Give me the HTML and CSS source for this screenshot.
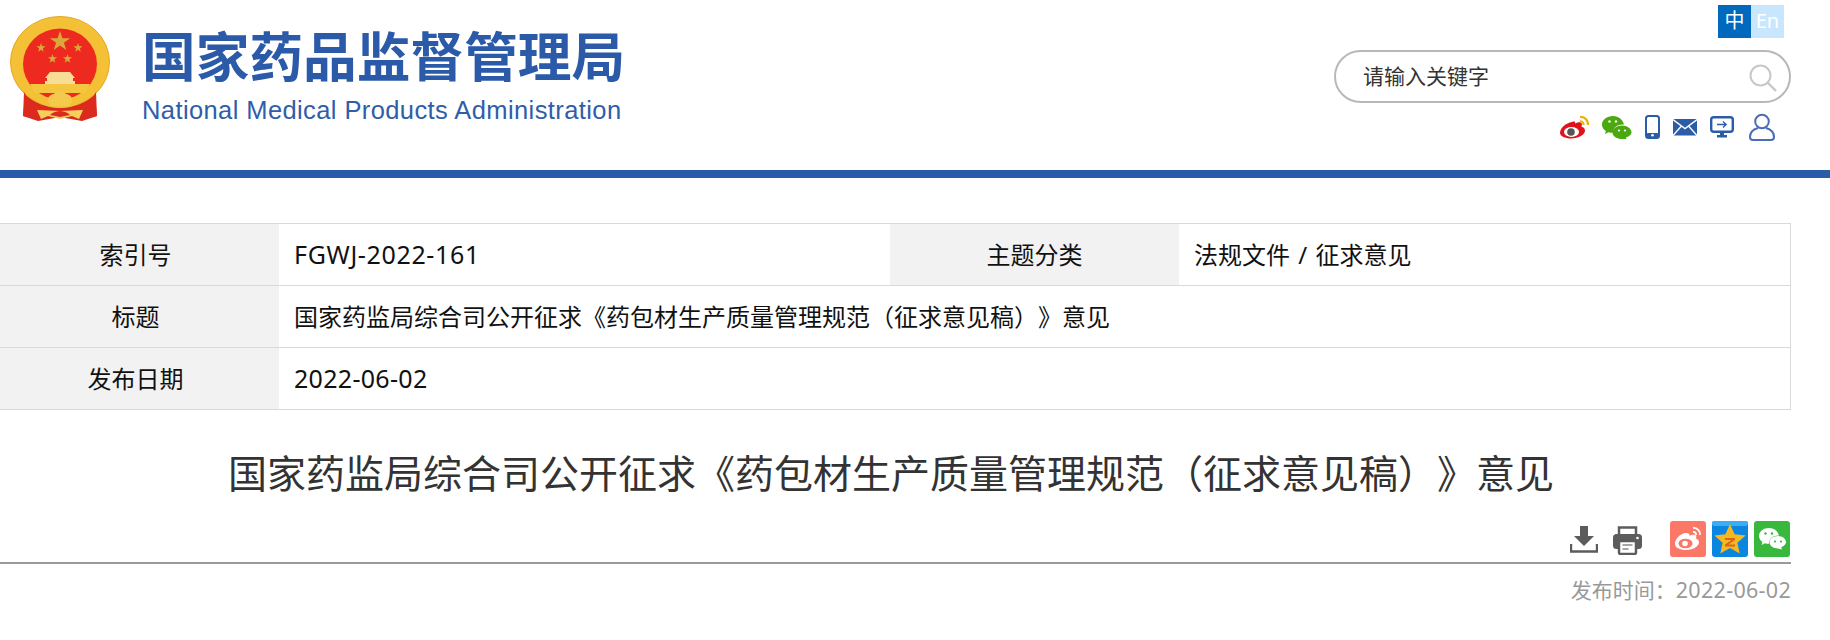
FILE: index.html
```html
<!DOCTYPE html>
<html lang="zh-CN">
  <head>
    <title>国家药监局综合司公开征求《药包材生产质量管理规范（征求意见稿）》意见</title>
    <meta charset="utf-8" />
    <link rel="stylesheet" href="styles.css">
  </head>

  <body>
    <header class="header">
      <div class="brand">
        <svg class="emblem" viewBox="0 0 130 135" width="130" height="135">
          <path d="M26 90 L23 116 L38 121 L60 117 L82 121 L97 116 L94 90 Z" fill="#d92a1c" />
          <ellipse cx="60" cy="62" rx="49.500" ry="45.500" fill="#f4c136" />
          <ellipse cx="60" cy="62" rx="49.500" ry="45.500" fill="none" stroke="#e5a825" stroke-width="1" />
          <ellipse cx="60" cy="64" rx="37" ry="35.500" fill="#ee2a20" />
          <path d="M60 31l2.400 7.300h7.700l-6.200 4.500 2.400 7.300-6.300-4.500-6.300 4.500 2.400-7.300-6.200-4.500h7.700z" fill="#d9a93a" />
          <path d="M41 43l1.100 3.300h3.500l-2.800 2.100 1 3.300-2.800-2-2.800 2 1-3.300-2.800-2.100h3.500z" fill="#d9a93a" />
          <path d="M78 43l1.100 3.300h3.500l-2.800 2.100 1 3.300-2.800-2-2.800 2 1-3.300-2.800-2.100h3.500z" fill="#d9a93a" />
          <path d="M52.500 54l1.100 3.300h3.500l-2.800 2.100 1 3.300-2.800-2-2.800 2 1-3.300-2.800-2.100h3.500z" fill="#d9a93a" />
          <path d="M67.500 54l1.100 3.300h3.500l-2.800 2.100 1 3.300-2.800-2-2.800 2 1-3.300-2.800-2.100h3.500z" fill="#d9a93a" />
          <path d="M50 72h20l5 6h-2v3h2v3H45v-3h2v-3h-2z" fill="#f7dd95" />
          <path d="M30 84h60l-2 4-3 5H35l-3-5z" fill="#f4c63f" />
          <path d="M24 92c6 12 20 18 36 18s30-6 36-18l1 24-12 3-25-5-25 5-12-3z" fill="#dd2a1e" />
          <path d="M29 92c8 9 19 14 31 14s23-5 31-14" fill="none" stroke="#f4c136" stroke-width="4" />
          <path d="M48 102c-1-6 4-8 6-8 1-2 4-3 6-3s5 1 6 3c2 0 7 2 6 8l-4 4H52z" fill="#f5ca4c" />
          <path d="M37 110l23 1 23-1-4 9-7-3-12 3-12-3-7 3z" fill="#f5cf5c" />
          <path d="M50 115c3-3 7-4 10-4s7 1 10 4l-10 2z" fill="#dd2a1e" />
        </svg>
        <div class="brand-text">
          <div class="brand-cn">国家药品监督管理局</div>
          <div class="brand-en">National Medical Products Administration</div>
        </div>
      </div>

      <div class="tools">
        <div class="lang">
          <a class="lang-item lang-on">中</a>
          <a class="lang-item lang-off">En</a>
        </div>
        <div class="search">
          <span class="search-text">请输入关键字</span>
          <svg class="search-icon" viewBox="0 0 28 28" width="28" height="28">
            <circle cx="11.500" cy="11.500" r="10" fill="none" stroke="#c8c8c8" stroke-width="2" />
            <path d="M19 19l8 8" stroke="#c8c8c8" stroke-width="2.400" />
          </svg>
        </div>
        <div class="links">
          <svg class="link-weibo" viewBox="0 0 30 24" width="30" height="24">
            <path d="M12 7C6 8 0 13 0 18c0 3 5 5.500 11 5.500 8 0 14-4 14-8 0-3-3-3.500-3.500-4 .8-2 .5-3.500-1-4-2-.5-4 .5-5.500 1 .5-2-.5-2.500-3-1.500z" fill="#e2121b" />
            <ellipse cx="11.500" cy="17" rx="7.500" ry="5" fill="#fff" />
            <circle cx="11" cy="17" r="3.800" fill="#555" />
            <path d="M20 2c4.500-.5 8.500 3.500 8 8M20 6.500c2-.3 3.800 1.500 3.500 3.500" fill="none" stroke="#eeb111" stroke-width="2.200" />
          </svg>
          <svg viewBox="0 0 30 24" width="30" height="24">
            <path d="M11 1C5 1 0 4.800 0 9.500c0 2.600 1.500 5 3.800 6.500L3 19l3.500-1.800c1.400.4 3 .6 4.500.6C11 12 16 9 22 9.500 21 4.800 16.500 1 11 1z" fill="#4ba80f" />
            <path d="M20 10.500c-5 0-9.500 3-9.500 7s4.500 6.500 9.500 6.500l4.500 .5-.5-2c3.500-1.300 5.500-3 5.500-5 0-4-4.500-7-9.500-7z" fill="#4ba80f" />
            <circle cx="7.500" cy="6.500" r="1.200" fill="#fff" />
            <circle cx="14" cy="6.500" r="1.200" fill="#fff" />
            <circle cx="17" cy="15.500" r="1.100" fill="#fff" />
            <circle cx="23" cy="15.500" r="1.100" fill="#fff" />
          </svg>
          <svg viewBox="0 0 15 24" width="15" height="24">
            <rect x="1" y="1" width="13" height="22" rx="2.500" fill="none" stroke="#2b5ca8" stroke-width="2" />
            <rect x="1" y="18" width="13" height="5" rx="2" fill="#2b5ca8" />
            <circle cx="7.500" cy="20.300" r="1.300" fill="#fff" />
          </svg>
          <svg viewBox="0 0 24 18" width="24" height="18">
            <rect y="1" width="24" height="16.500" rx="1" fill="#2b5ca8" />
            <path d="M0 1.500l12 9 12-9M0 17.500l8-9M24 17.500l-8-9" fill="none" stroke="#fff" stroke-width="1.400" />
          </svg>
          <svg viewBox="0 0 24 22" width="24" height="22">
            <rect x="1.200" y="1.200" width="21.600" height="14.600" rx="2.500" fill="#fff" stroke="#2b5ca8" stroke-width="2.400" />
            <path d="M7 8.500h9M13 5.500l3.200 3-3.200 3" fill="none" stroke="#2b5ca8" stroke-width="1.300" />
            <path d="M10 17h4v2h3v2.500H7V19h3z" fill="#2b5ca8" />
          </svg>
          <svg class="link-user" viewBox="0 0 26 28" width="26" height="28">
            <circle cx="13" cy="8.500" r="6.800" fill="none" stroke="#4a6db5" stroke-width="2" />
            <path d="M9 15C4 16.500 1 20 1 24c0 2 1 3 3 3h18c2 0 3-1 3-3 0-4-3-7.500-8-9" fill="none" stroke="#4a6db5" stroke-width="2" />
          </svg>
        </div>
      </div>
    </header>

    <div class="bar"></div>

    <main class="content">
      <div class="info">
        <div class="info-label info-first">索引号</div>
        <div class="info-value info-code">FGWJ-2022-161</div>
        <div class="info-label">主题分类</div>
        <div class="info-value info-spaced">法规文件 / 征求意见</div>
        <div class="info-label info-first">标题</div>
        <div class="info-value info-wide">国家药监局综合司公开征求《药包材生产质量管理规范（征求意见稿）》意见</div>
        <div class="info-label info-first">发布日期</div>
        <div class="info-value info-wide info-date">2022-06-02</div>
      </div>

      <h1 class="title">国家药监局综合司公开征求《药包材生产质量管理规范（征求意见稿）》意见</h1>

      <div class="actions">
        <svg class="act-download" viewBox="0 0 28 27" width="28" height="27">
          <path d="M10 0h8v10h6L14 20 4 10h6z" fill="#5c5c5c" />
          <path d="M1 18v7.500h26V18" fill="none" stroke="#5c5c5c" stroke-width="2.400" />
        </svg>
        <svg class="act-print" viewBox="0 0 29 29" width="29" height="29">
          <path d="M6 9V1.500h17V9" fill="none" stroke="#5c5c5c" stroke-width="2.500" />
          <rect y="8" width="29" height="15" rx="3.500" fill="#5c5c5c" />
          <rect x="6" y="15" width="17" height="13" rx="1.500" fill="#fff" stroke="#5c5c5c" stroke-width="2.500" />
          <path d="M9.500 19h10M9.500 23h6" stroke="#8a8a8a" stroke-width="1.600" />
          <circle cx="24.500" cy="12" r="1.300" fill="#fff" />
        </svg>
        <div class="share">
          <svg class="tile" viewBox="0 0 36 36" width="36" height="36">
            <rect width="36" height="36" rx="3" fill="#fb7767" />
            <path d="M15 12C10 13 5 18 5 23c0 3.500 5 6 11 6 8 0 13-4 13-8 0-2.500-2.500-3-3-3.500.7-2 .3-3.300-1-3.700-1.800-.5-4 .3-5.500 1 .5-2-1-3-4.500-2.800z" fill="#fff" />
            <ellipse cx="15.500" cy="22.500" rx="7" ry="4.800" fill="#fb7767" />
            <circle cx="15" cy="22.500" r="2.800" fill="#fff" />
            <path d="M23 7c4-.5 7.500 3 7 7M23 11c2-.3 3.300 1.200 3 3" fill="none" stroke="#fff" stroke-width="1.800" />
          </svg>
          <svg class="tile" viewBox="0 0 36 36" width="36" height="36">
            <rect width="36" height="36" rx="3" fill="#0a85e0" />
            <rect width="36" height="5" rx="2" fill="#39aef2" />
            <path d="M18 3l4.600 10.200 11 1.200-8.200 7.300 2.300 10.800L18 27l-9.700 5.500 2.300-10.800-8.200-7.300 11-1.200z" fill="#f5b81f" />
            <path d="M13 17h10v2l-6.500 4.500H23v2H13v-2l6.500-4.500H13z" fill="#d9661a" />
          </svg>
          <svg class="tile" viewBox="0 0 36 36" width="36" height="36">
            <rect width="36" height="36" rx="3" fill="#38b83c" />
            <path d="M15 7C9.500 7 5 10.500 5 15c0 2.400 1.300 4.500 3.400 6l-.8 3 3.300-1.700c1.300.4 2.700.5 4.100.5-.2-5 4.300-8.500 10-8.300C24 10 20 7 15 7z" fill="#fff" />
            <path d="M24 15c-4.500 0-8.500 2.800-8.500 6.300s4 6.200 8.500 6.200l4 1-.8-2.300c2.800-1.200 4.800-3 4.800-4.900 0-3.500-3.500-6.300-8-6.300z" fill="#fff" />
            <circle cx="11.500" cy="12.500" r="1.200" fill="#38b83c" />
            <circle cx="18" cy="12.500" r="1.200" fill="#38b83c" />
            <circle cx="21" cy="20.500" r="1.100" fill="#38b83c" />
            <circle cx="27" cy="20.500" r="1.100" fill="#38b83c" />
          </svg>
        </div>
      </div>

      <div class="pubdate">发布时间：<span class="pubdate-num">2022-06-02</span></div>
    </main>
  </body>
</html>
```

FILE: styles.css
```css
* {
  box-sizing: border-box;
}

body {
  margin: 0;
  background: #fff;
  color: #333;
  font-family: "Noto Sans", "Noto Sans CJK SC", sans-serif;
  text-spacing-trim: space-all;
  overflow: hidden;
}

.header {
  display: flex;
  justify-content: space-between;
  height: 170px;
  width: 1791px;
}

.brand {
  display: flex;
  gap: 12px;
}

.brand-text {
  padding-top: 22px;
}

.brand-cn {
  color: #2b5aa8;
  font-family: "Noto Sans CJK SC", sans-serif;
  font-size: 53.7px;
  font-weight: 700;
  line-height: 64px;
  white-space: nowrap;
}

.brand-en {
  margin-top: 10px;
  color: #2f5ea9;
  font-family: "Liberation Sans", sans-serif;
  font-size: 25.5px;
  letter-spacing: 0.4px;
  line-height: 28px;
  white-space: nowrap;
}

.tools {
  display: flex;
  flex-direction: column;
  align-items: flex-end;
  padding-top: 5px;
}

.lang {
  display: flex;
  margin-right: 7px;
}

.lang-item {
  width: 33px;
  height: 33px;
  color: #fff;
  font-size: 20px;
  line-height: 31px;
  text-align: center;
}

.lang-on {
  background: #0068bd;
}

.lang-off {
  background: #c9e6ff;
}

.search {
  display: flex;
  align-items: center;
  justify-content: space-between;
  width: 457px;
  height: 53px;
  margin-top: 12px;
  padding: 0 12px 0 27px;
  border: 2px solid #b8b8b8;
  border-radius: 27px;
}

.search-text {
  padding-bottom: 3px;
  color: #333;
  font-size: 21px;
}

.search-icon {
  margin-top: 3px;
}

.links {
  display: flex;
  align-items: center;
  gap: 13px;
  height: 30px;
  margin-top: 9px;
  margin-right: 16px;
}

.link-weibo {
  margin-right: -1px;
}

.link-user {
  margin-left: 2px;
}

.bar {
  width: 100%;
  height: 8px;
  background: #2b5aa8;
}

.content {
  width: 1791px;
  padding-top: 45px;
}

.info {
  display: grid;
  grid-template-columns: 279px 611px 289px 1fr;
  grid-auto-rows: 62px;
  border-top: 1px solid #d9d9d9;
  border-right: 1px solid #d9d9d9;
  color: #111;
  font-size: 24px;
}

.info-label,
.info-value {
  display: flex;
  align-items: center;
  padding-bottom: 2px;
  border-bottom: 1px solid #d9d9d9;
}

.info-label {
  justify-content: center;
  background: #f2f2f2;
}

.info-first {
  padding-right: 8px;
}

.info-value {
  padding-left: 15px;
}

.info-code {
  font-size: 25px;
  letter-spacing: 0.65px;
}

.info-date {
  font-size: 25px;
  letter-spacing: 0.3px;
}

.info-spaced {
  word-spacing: 2px;
}

.info-wide {
  grid-column: span 3;
}

.title {
  margin: 0;
  padding-top: 33px;
  padding-right: 9px;
  color: #333;
  font-size: 39px;
  font-weight: 400;
  line-height: 60px;
  text-align: center;
  white-space: nowrap;
}

.actions {
  display: flex;
  align-items: flex-end;
  justify-content: flex-end;
  height: 61px;
  padding-right: 1px;
  padding-bottom: 5px;
  border-bottom: 2px solid #999;
}

.act-download {
  margin-right: 15px;
  margin-bottom: 4px;
}

.act-print {
  margin-right: 28px;
  margin-bottom: 2px;
}

.share {
  display: flex;
  gap: 6px;
}

.pubdate {
  padding-top: 11px;
  color: #999;
  font-size: 21px;
  line-height: 30px;
  text-align: right;
}

.pubdate-num {
  font-size: 21.5px;
  letter-spacing: 0.3px;
}
```
